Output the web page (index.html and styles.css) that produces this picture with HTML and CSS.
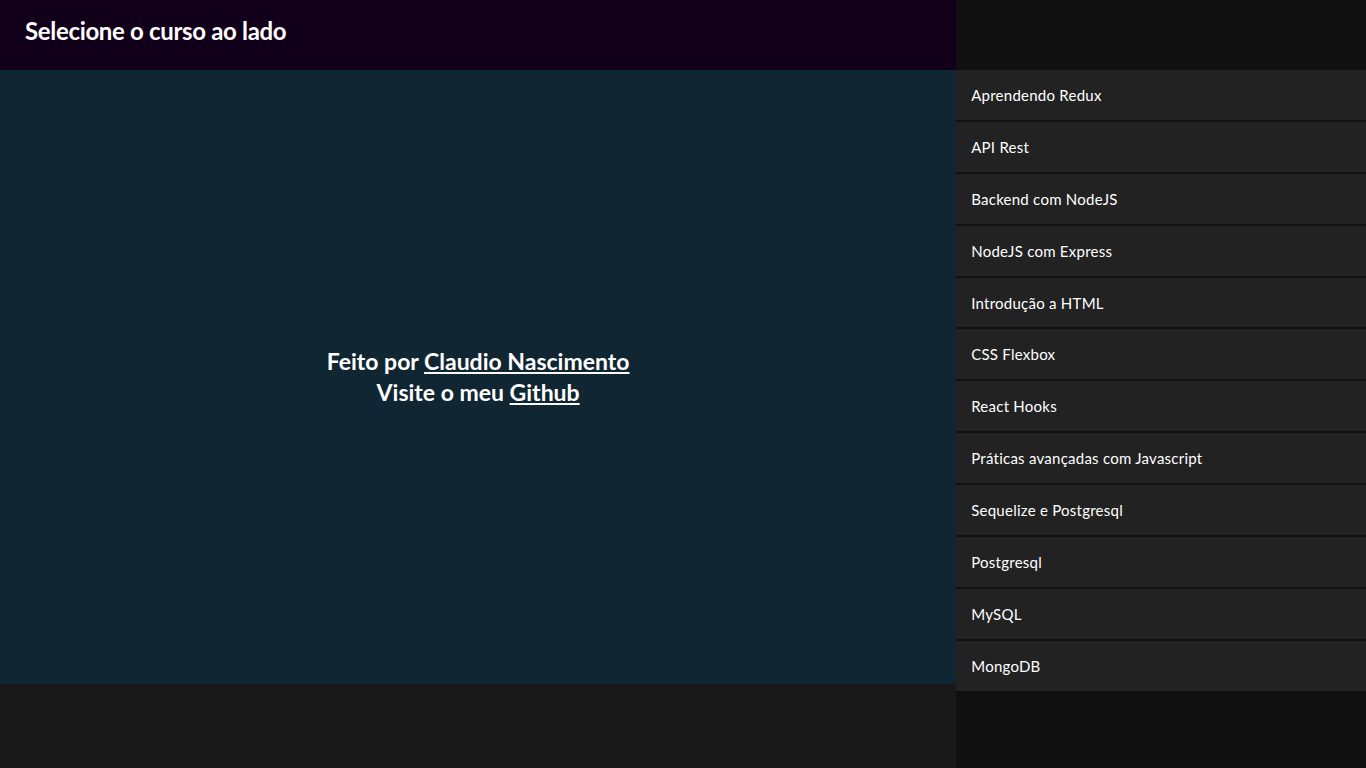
FILE: index.html
```html
<!DOCTYPE html>
<html lang="pt-BR">
<head>
<meta charset="utf-8">
<title>Cursos</title>
<link rel="stylesheet" href="styles.css">
</head>
<body>
<div class="app">
  <div class="content">
    <header class="topbar">
      <h1 class="title">Selecione o curso ao lado</h1>
    </header>
    <main class="player">
      <p class="credits">Feito por <a href="#">Claudio Nascimento</a><br>Visite o meu <a href="#">Github</a></p>
    </main>
  </div>
  <aside class="sidebar">
    <ul class="courses">
      <li class="course">Aprendendo Redux</li>
      <li class="course">API Rest</li>
      <li class="course">Backend com NodeJS</li>
      <li class="course">NodeJS com Express</li>
      <li class="course">Introdução a HTML</li>
      <li class="course">CSS Flexbox</li>
      <li class="course">React Hooks</li>
      <li class="course">Práticas avançadas com Javascript</li>
      <li class="course">Sequelize e Postgresql</li>
      <li class="course">Postgresql</li>
      <li class="course">MySQL</li>
      <li class="course">MongoDB</li>
    </ul>
  </aside>
</div>
</body>
</html>
```
FILE: styles.css
```css
* { box-sizing: border-box; }
html, body { margin: 0; padding: 0; height: 100%; }
body {
  font-family: Lato, "Noto Sans", sans-serif;
  color: #fff;
  background: #191919;
}
.app {
  display: flex;
  height: 100vh;
}
.content {
  width: 70%;
  display: flex;
  flex-direction: column;
  background: #191919;
}
.topbar {
  height: 70px;
  background: #12001a;
  display: flex;
  align-items: center;
  padding: 0 25px 9px;
}
.title {
  margin: 0;
  font-size: 24px;
  font-weight: 700;
  letter-spacing: -0.33px;
}
.player {
  height: 80vh;
  background: #112633;
  display: flex;
  align-items: center;
  justify-content: center;
}
.credits {
  margin: 0;
  text-align: center;
  font-size: 23px;
  font-weight: 700;
  line-height: 31px;
}
.credits a { color: #fff; text-decoration: underline; }
.sidebar {
  width: 30%;
  background: #101010;
  padding-top: 70px;
}
.courses {
  list-style: none;
  margin: 0;
  padding: 0;
}
.course {
  background: #222;
  height: 51.9px;
  padding: 0 15px;
  display: flex;
  align-items: center;
  font-size: 15px;
  letter-spacing: 0.25px;
  border-bottom: 2px solid #111;
}
.course:last-child { border-bottom: 0; height: 50px; }
```
